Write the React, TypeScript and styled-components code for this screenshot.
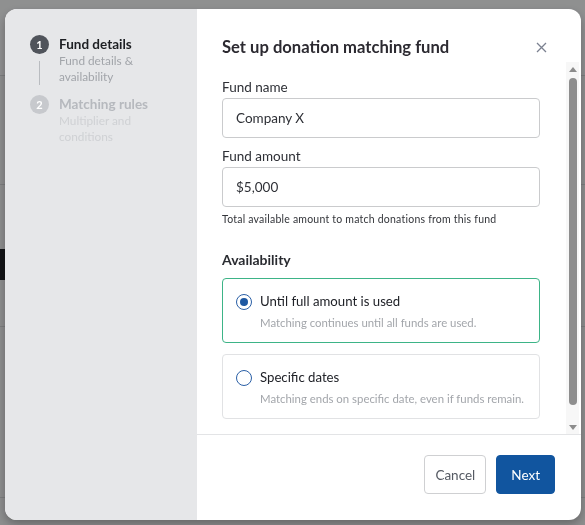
import styled, { createGlobalStyle } from "styled-components";

const GlobalStyle = createGlobalStyle`
  html, body {
    margin: 0;
    padding: 0;
    width: 585px;
    height: 525px;
    overflow: hidden;
    font-family: Lato, "Open Sans", sans-serif;
  }
`;

// Page sitting behind the modal
const Page = styled.div`
  width: 585px;
  height: 525px;
  background: #f3f4f5;
  display: flex;
  flex-direction: column;
`;

const PageBand = styled.div<{ h: number; bg?: string; line?: boolean }>`
  height: ${(p) => p.h}px;
  background: ${(p) => p.bg ?? "transparent"};
  border-bottom: ${(p) => (p.line ? "1px solid #d6d8db" : "none")};
  flex-shrink: 0;
  display: flex;
`;

const PageBlock = styled.div<{ w: number; bg: string }>`
  width: ${(p) => p.w}px;
  background: ${(p) => p.bg};
`;

const Overlay = styled.div`
  position: fixed;
  inset: 0;
  background: rgba(0, 0, 0, 0.42);
  padding: 9px 4px 5px 5px;
  box-sizing: border-box;
`;

const Modal = styled.div`
  width: 576px;
  height: 511px;
  display: grid;
  grid-template-columns: 192px 1fr;
  background: #fff;
  border-radius: 12px;
  overflow: hidden;
  box-shadow: 0 4px 10px rgba(0, 0, 0, 0.28);
`;

const Sidebar = styled.div`
  background: #e6e7e9;
  padding: 26px 12px 0 25px;
`;

const Step = styled.div<{ next?: boolean }>`
  display: flex;
  gap: 10px;
  margin-top: ${(p) => (p.next ? "10px" : "0")};
`;

const StepRail = styled.div`
  width: 19px;
  display: flex;
  flex-direction: column;
  align-items: center;
`;

const StepDot = styled.div<{ active?: boolean }>`
  width: 19px;
  height: 19px;
  border-radius: 50%;
  background: ${(p) => (p.active ? "#50545b" : "#c7c9cd")};
  color: #fff;
  font-size: 11px;
  font-weight: 700;
  display: flex;
  align-items: center;
  justify-content: center;
  flex-shrink: 0;
`;

const Connector = styled.div`
  width: 1px;
  flex: 1;
  background: #b9bcc0;
  margin-top: 7px;
`;

const StepText = styled.div`
  display: flex;
  flex-direction: column;
`;

const StepTitle = styled.div<{ active?: boolean }>`
  font-size: 13.5px;
  font-weight: 700;
  line-height: 18px;
  color: ${(p) => (p.active ? "#1d1f23" : "#b6b9be")};
`;

const StepSub = styled.div<{ active?: boolean }>`
  font-size: 11.8px;
  line-height: 16px;
  color: ${(p) => (p.active ? "#a2a5aa" : "#cfd1d4")};
`;

const Main = styled.div`
  display: flex;
  flex-direction: column;
  min-height: 0;
`;

const Header = styled.div`
  display: flex;
  align-items: center;
  justify-content: space-between;
  padding: 27px 34px 4px 25px;
`;

const Title = styled.h2`
  margin: 0;
  font-size: 16.6px;
  line-height: 22px;
  font-weight: 700;
  color: #2c2a31;
`;

const CloseButton = styled.button`
  border: none;
  background: none;
  padding: 0;
  width: 11px;
  height: 11px;
  display: flex;
  color: #7b8190;
  cursor: pointer;
`;

const Body = styled.div`
  flex: 1;
  min-height: 0;
  display: flex;
`;

const Content = styled.div`
  flex: 1;
  overflow: hidden;
  padding: 16px 26px 0 25px;
`;

const Label = styled.label`
  display: block;
  font-size: 13.5px;
  line-height: 18px;
  color: #2e3036;
`;

const Field = styled.div<{ gap?: number }>`
  margin-top: ${(p) => p.gap ?? 0}px;
`;

const Input = styled.input`
  display: block;
  box-sizing: border-box;
  width: 100%;
  height: 40px;
  margin-top: 2px;
  padding: 0 13px;
  border: 1px solid #cacbcd;
  border-radius: 4px;
  font-family: Lato, sans-serif;
  font-size: 13.5px;
  color: #2e3036;
  outline: none;
`;

const Hint = styled.div`
  margin-top: 5px;
  font-size: 10.5px;
  line-height: 14px;
  letter-spacing: 0.22px;
  color: #33353a;
`;

const SectionTitle = styled.div`
  margin-top: 25px;
  font-size: 14px;
  line-height: 18px;
  font-weight: 700;
  color: #2a2c31;
`;

const Options = styled.div`
  margin-top: 9px;
  display: flex;
  flex-direction: column;
  gap: 11px;
`;

const Option = styled.label<{ selected?: boolean }>`
  display: flex;
  gap: 8px;
  padding: 13px 8px 11px 13px;
  border: 1px solid ${(p) => (p.selected ? "#3db487" : "#e1e2e4")};
  border-radius: 4px;
  cursor: pointer;
`;

const Radio = styled.span<{ checked?: boolean }>`
  width: 16px;
  height: 16px;
  box-sizing: border-box;
  margin-top: 2px;
  border-radius: 50%;
  border: 1.5px solid #2a5fa6;
  display: flex;
  align-items: center;
  justify-content: center;
  flex-shrink: 0;
  &::after {
    content: "";
    width: 8px;
    height: 8px;
    border-radius: 50%;
    background: #1d58a2;
    display: ${(p) => (p.checked ? "block" : "none")};
  }
`;

const OptionText = styled.div`
  display: flex;
  flex-direction: column;
  white-space: nowrap;
`;

const OptionTitle = styled.div`
  font-size: 13.2px;
  line-height: 18px;
  color: #202228;
`;

const OptionSub = styled.div`
  margin-top: 5px;
  font-size: 11.4px;
  line-height: 16px;
  color: #a3a6ab;
`;

const ScrollTrack = styled.div`
  width: 13px;
  margin-right: 2px;
  background: #f7f7f7;
  display: flex;
  flex-direction: column;
  align-items: center;
`;

const ScrollArrow = styled.div<{ down?: boolean }>`
  height: 14px;
  display: flex;
  align-items: center;
  justify-content: center;
  &::after {
    content: "";
    border-left: 4px solid transparent;
    border-right: 4px solid transparent;
    ${(p) =>
      p.down ? "border-top: 5px solid #8c8c8c;" : "border-bottom: 5px solid #8c8c8c;"}
  }
`;

const ScrollThumb = styled.div`
  width: 8px;
  height: 327px;
  margin-top: 2px;
  border-radius: 4px;
  background: #8e8e8e;
`;

const ScrollSpacer = styled.div`
  flex: 1;
`;

const Footer = styled.div`
  height: 86px;
  box-sizing: border-box;
  border-top: 1px solid #e3e4e6;
  display: flex;
  justify-content: flex-end;
  align-items: flex-start;
  gap: 10px;
  padding: 20px 26px 0;
`;

const Button = styled.button<{ primary?: boolean }>`
  height: 39px;
  padding: 0 ${(p) => (p.primary ? "14px" : "10px")};
  border-radius: 4px;
  border: 1px solid ${(p) => (p.primary ? "#11559f" : "#cfd0d2")};
  background: ${(p) => (p.primary ? "#11559f" : "#fff")};
  color: ${(p) => (p.primary ? "#fff" : "#555a63")};
  font-family: Lato, sans-serif;
  font-size: 13.5px;
  cursor: pointer;
`;

export default function App() {
  return (
    <>
      <GlobalStyle />
      <Page>
        <PageBand h={75} bg="#f7f8f9" line />
        <PageBand h={108} line />
        <PageBand h={64} />
        <PageBand h={31}>
          <PageBlock w={60} bg="#1f2227" />
        </PageBand>
        <PageBand h={46} line />
        <PageBand h={170} line />
      </Page>
      <Overlay>
        <Modal>
          <Sidebar>
            <Step>
              <StepRail>
                <StepDot active>1</StepDot>
                <Connector />
              </StepRail>
              <StepText>
                <StepTitle active>Fund details</StepTitle>
                <StepSub active>Fund details &amp;</StepSub>
                <StepSub active>availability</StepSub>
              </StepText>
            </Step>
            <Step next>
              <StepRail>
                <StepDot>2</StepDot>
              </StepRail>
              <StepText>
                <StepTitle>Matching rules</StepTitle>
                <StepSub>Multiplier and</StepSub>
                <StepSub>conditions</StepSub>
              </StepText>
            </Step>
          </Sidebar>
          <Main>
            <Header>
              <Title>Set up donation matching fund</Title>
              <CloseButton aria-label="Close">
                <svg width="11" height="11" viewBox="0 0 11 11">
                  <path
                    d="M1 1L10 10M10 1L1 10"
                    stroke="currentColor"
                    strokeWidth="1.3"
                    fill="none"
                  />
                </svg>
              </CloseButton>
            </Header>
            <Body>
              <Content>
                <Field>
                  <Label>Fund name</Label>
                  <Input defaultValue="Company X" />
                </Field>
                <Field gap={9}>
                  <Label>Fund amount</Label>
                  <Input defaultValue="$5,000" />
                  <Hint>Total available amount to match donations from this fund</Hint>
                </Field>
                <SectionTitle>Availability</SectionTitle>
                <Options>
                  <Option selected>
                    <Radio checked />
                    <OptionText>
                      <OptionTitle>Until full amount is used</OptionTitle>
                      <OptionSub>Matching continues until all funds are used.</OptionSub>
                    </OptionText>
                  </Option>
                  <Option>
                    <Radio />
                    <OptionText>
                      <OptionTitle>Specific dates</OptionTitle>
                      <OptionSub>
                        Matching ends on specific date, even if funds remain.
                      </OptionSub>
                    </OptionText>
                  </Option>
                </Options>
              </Content>
              <ScrollTrack>
                <ScrollArrow />
                <ScrollThumb />
                <ScrollSpacer />
                <ScrollArrow down />
              </ScrollTrack>
            </Body>
            <Footer>
              <Button>Cancel</Button>
              <Button primary>Next</Button>
            </Footer>
          </Main>
        </Modal>
      </Overlay>
    </>
  );
}
